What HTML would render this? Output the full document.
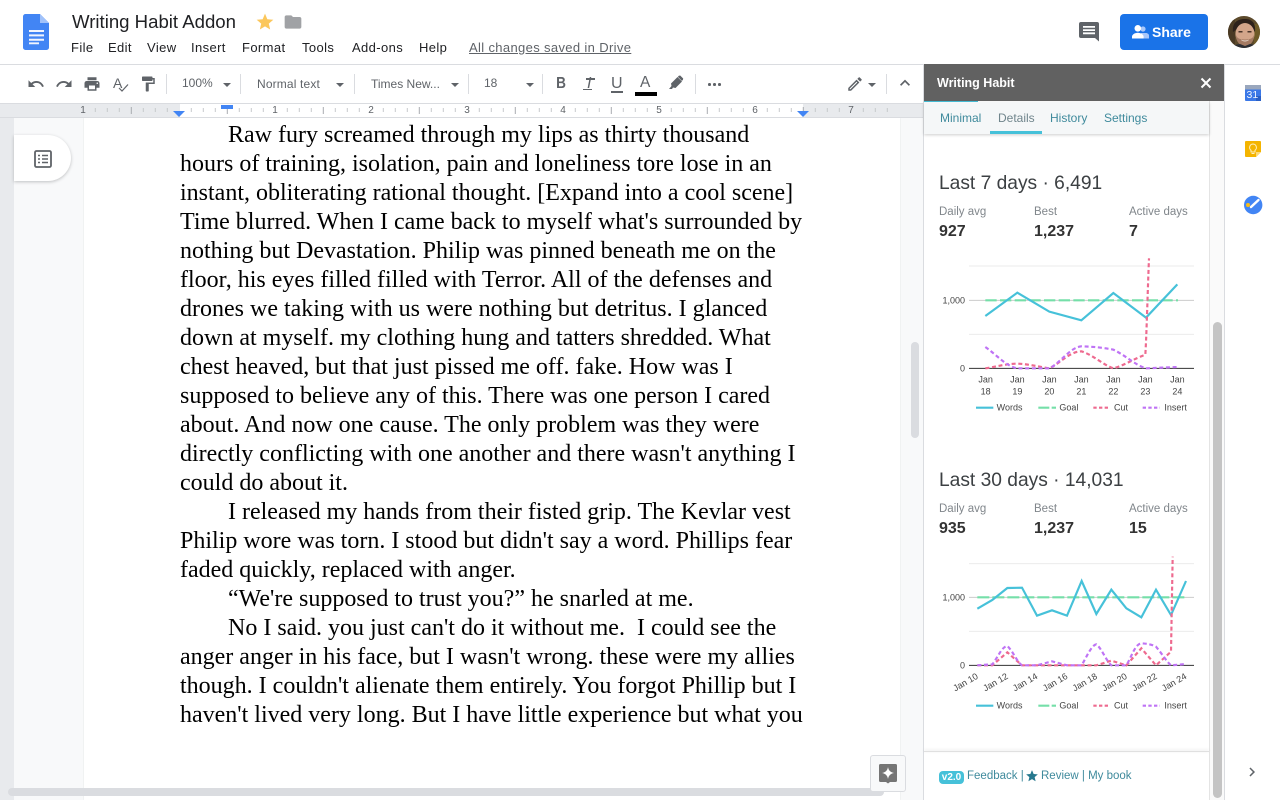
<!DOCTYPE html>
<html lang="en"><head><meta charset="utf-8"><title>Writing Habit Addon</title>
<style>
html,body{margin:0;padding:0;width:1280px;height:800px;overflow:hidden;background:#fff;font-family:"Liberation Sans",Arial,sans-serif}
.a{position:absolute}
.t{position:absolute;white-space:nowrap}
.m{font-size:13px;line-height:16px;top:40px;color:#202124;letter-spacing:.38px}
.tb{font-size:12px;line-height:16px;top:76px;color:#5f6368}
.arr{position:absolute;top:83px;width:0;height:0;border-left:4.5px solid transparent;border-right:4.5px solid transparent;border-top:4.5px solid #5f6368}
.sep{position:absolute;top:74px;width:1px;height:20px;background:#dadce0}
.ic{position:absolute;fill:#5f6368}
.dl{position:absolute;left:180px;white-space:nowrap;font-family:"Liberation Serif","Times New Roman",serif;font-size:24px;line-height:29px;color:#000}
.rn{position:absolute;top:105px;font-size:10px;line-height:12px;color:#5f6368;width:12px;text-align:center}
.tab{position:absolute;top:110px;font-size:12px;line-height:16px;color:#3f8a9c}
.h{position:absolute;left:939px;font-size:19.2px;line-height:24px;color:#3c4043;white-space:nowrap}
.lb{position:absolute;font-size:11.5px;line-height:14px;color:#80868b;white-space:nowrap}
.v{position:absolute;font-size:16px;font-weight:bold;line-height:18px;color:#333;white-space:nowrap}
.fl{position:absolute;top:768px;font-size:11.5px;line-height:16px;color:#3f8a9c;white-space:nowrap}
svg text{font-family:"Liberation Sans",Arial,sans-serif;font-size:27px;fill:#444}
</style></head><body>

<!-- top bar -->
<svg class="a" style="left:23px;top:14px" width="26" height="36" viewBox="0 0 26 36">
<path d="M2.500 0H17L26 9v24.500a2.500 2.500 0 0 1-2.500 2.500h-21A2.500 2.500 0 0 1 0 33.500V2.500A2.500 2.500 0 0 1 2.500 0z" fill="#4285f4"/>
<path d="M17 0l9 9h-9z" fill="#a1c2fa"/>
<path d="M6 16h15v2H6zM6 20.400h15v2H6zM6 24.700h15v2H6zM6 28.400h10v1.800H6z" fill="#f1f5fe"/>
</svg>
<div class="t" style="left:72px;top:11px;font-size:18.600px;line-height:22px;color:#202124">Writing Habit Addon</div>
<svg class="a" style="left:255px;top:12px" width="20" height="20" viewBox="0 0 24 24"><path fill="#fbc75c" d="M12 17.270L18.180 21l-1.640-7.030L22 9.240l-7.190-.61L12 2 9.190 8.630 2 9.240l5.460 4.730L5.820 21z"/></svg>
<svg class="a" style="left:283px;top:12px" width="20" height="20" viewBox="0 0 24 24"><path fill="#a0a2a5" d="M10 4H4c-1.100 0-2 .9-2 2v12c0 1.100.9 2 2 2h16c1.100 0 2-.9 2-2V8c0-1.100-.9-2-2-2h-8l-2-2z"/></svg>
<div class="t m" style="left:71px">File</div>
<div class="t m" style="left:108px">Edit</div>
<div class="t m" style="left:147px">View</div>
<div class="t m" style="left:191px">Insert</div>
<div class="t m" style="left:242px">Format</div>
<div class="t m" style="left:302px">Tools</div>
<div class="t m" style="left:352px">Add-ons</div>
<div class="t m" style="left:419px">Help</div>
<div class="t m" style="left:469px;color:#5f6368;text-decoration:underline;letter-spacing:.35px">All changes saved in Drive</div>

<svg class="ic" style="left:1079px;top:22px" width="20" height="20" viewBox="0 0 20 20"><path d="M2 0h16a2 2 0 0 1 2 2v17.500L16 16H2a2 2 0 0 1-2-2V2a2 2 0 0 1 2-2zM4 4v1.800h12V4zM4 7.200V9h12V7.200zM4 10.400v1.800h12v-1.800z" fill-rule="evenodd"/></svg>
<div class="a" style="left:1120px;top:14px;width:88px;height:36px;background:#1a73e8;border-radius:4px"></div>
<svg class="a" style="left:1132px;top:25px" width="17" height="14" viewBox="0 0 17 14"><circle cx="11" cy="4" r="2.600" fill="#a8c7fa"/><path d="M9 8h5c1.500 0 3 1.200 3 2.500V13.500H10z" fill="#a8c7fa"/><circle cx="5.800" cy="3.300" r="3.300" fill="#fff"/><path d="M0 13.500v-2c0-2 3-3.800 5.800-3.800s5.800 1.800 5.800 3.800v2z" fill="#fff"/></svg>
<div class="t" style="left:1152px;top:23px;font-size:14px;font-weight:bold;line-height:18px;color:#fff">Share</div>
<svg class="a" style="left:1228px;top:16px" width="32" height="32" viewBox="0 0 32 32">
<defs><clipPath id="av"><circle cx="16" cy="16" r="16"/></clipPath></defs>
<g clip-path="url(#av)"><rect width="32" height="32" fill="#5c4a2c"/>
<rect x="0" y="0" width="7" height="32" fill="#4a3a24"/><rect x="26" y="8" width="6" height="24" fill="#6e5a28"/>
<path d="M5 16C4 6 10 3 17 3s11 4 10 13l-2-3c-4-3-11-3-16 0z" fill="#2d211b"/>
<ellipse cx="17" cy="18" rx="9.500" ry="11" fill="#d3a58a"/>
<path d="M8 19c0 8 5 11 9 11s9-3 9-11c-1 3-3 4.500-9 4.500S9 22 8 19z" fill="#a47a62"/>
<path d="M13 23.500c2 1.500 6 1.500 8 0-1 2.500-7 2.500-8 0z" fill="#f5ebe2"/>
<rect x="10.500" y="15" width="4" height="1.500" fill="#4a3428"/><rect x="19.500" y="15" width="4" height="1.500" fill="#4a3428"/>
<path d="M3 32c1-3 6-3.500 9-4l5 2 5-2c3 .5 7 1 9 4z" fill="#2b2d33"/></g></svg>

<div class="a" style="left:0;top:64px;width:1225px;height:1px;background:#dadce0"></div>
<div class="a" style="left:1225px;top:64px;width:55px;height:1px;background:#dadce0"></div>

<!-- toolbar -->
<svg class="ic" style="left:27px;top:75px" width="18" height="18" viewBox="0 0 24 24"><path d="M12.500 8c-2.650 0-5.050.99-6.900 2.600L2 7v9h9l-3.620-3.620c1.390-1.160 3.160-1.880 5.120-1.880 3.540 0 6.550 2.310 7.600 5.500l2.370-.78C21.080 11.030 17.150 8 12.500 8z"/></svg>
<svg class="ic" style="left:55px;top:75px" width="18" height="18" viewBox="0 0 24 24"><path d="M18.400 10.600C16.550 8.990 14.150 8 11.500 8c-4.650 0-8.580 3.030-9.960 7.220L3.900 16c1.050-3.190 4.050-5.500 7.600-5.500 1.950 0 3.730.72 5.120 1.880L13 16h9V7l-3.600 3.600z"/></svg>
<svg class="ic" style="left:83px;top:75px" width="18" height="18" viewBox="0 0 24 24"><path d="M19 8H5c-1.660 0-3 1.340-3 3v6h4v4h12v-4h4v-6c0-1.660-1.340-3-3-3zm-3 11H8v-5h8v5zm3-7c-.55 0-1-.45-1-1s.45-1 1-1 1 .45 1 1-.45 1-1 1zm-1-9H6v4h12V3z"/></svg>
<div class="t" style="left:113px;top:75px;font-size:14px;line-height:16px;color:#5f6368">A</div>
<svg class="a" style="left:118px;top:83px" width="11" height="10" viewBox="0 0 11 10"><path d="M1 5l3 3 6-6.500" fill="none" stroke="#5f6368" stroke-width="1.200"/></svg>
<svg class="ic" style="left:139px;top:75px" width="18" height="18" viewBox="0 0 24 24"><path d="M18 4V3c0-.55-.45-1-1-1H5c-.55 0-1 .45-1 1v4c0 .55.45 1 1 1h12c.55 0 1-.45 1-1V6h1v4H9v11c0 .55.45 1 1 1h2c.55 0 1-.45 1-1v-9h8V4h-3z"/></svg>
<div class="sep" style="left:166px"></div>
<div class="t tb" style="left:182px;top:75px">100%</div><div class="arr" style="left:223px"></div>
<div class="sep" style="left:240px"></div>
<div class="t tb" style="left:257px;letter-spacing:.15px">Normal text</div><div class="arr" style="left:336px"></div>
<div class="sep" style="left:354px"></div>
<div class="t tb" style="left:371px">Times New...</div><div class="arr" style="left:451px"></div>
<div class="sep" style="left:468px"></div>
<div class="t tb" style="left:484px;top:75px">18</div><div class="arr" style="left:526px"></div>
<div class="sep" style="left:542px"></div>
<div class="t" style="left:555px;top:75px;width:12px;text-align:center;font-size:16px;font-weight:bold;line-height:18px;color:#5f6368;transform:scaleX(.85)">B</div>
<div class="t" style="left:587px;top:75px;font-size:16px;font-style:italic;line-height:18px;color:#5f6368">I</div>
<div class="a" style="left:586px;top:78px;width:9px;height:1.500px;background:#5f6368"></div>
<div class="a" style="left:583px;top:88.500px;width:9px;height:1.500px;background:#5f6368"></div>
<div class="t" style="left:611px;top:75px;font-size:16px;line-height:18px;color:#5f6368;">U</div>
<div class="a" style="left:611px;top:91px;width:12px;height:1.500px;background:#5f6368"></div>
<div class="t" style="left:640px;top:74px;font-size:15.500px;line-height:18px;color:#5f6368">A</div>
<div class="a" style="left:635px;top:92px;width:22px;height:4px;background:#000"></div>
<svg class="ic" style="left:668px;top:75px" width="16" height="16" viewBox="0 0 16 16"><path d="M1 14l2.500-3 -.5-2.500L9.500 2l4.500 4.500L7.500 13 5 12.500 4 14z"/><path d="M10.800 .8l1.400-.3 3 3-.3 1.400-1 1-4-4z"/></svg>
<div class="sep" style="left:695px"></div>
<div class="a" style="left:708px;top:83px;width:2.500px;height:2.500px;background:#5f6368;border-radius:50%;box-shadow:5px 0 #5f6368,10px 0 #5f6368"></div>
<svg class="ic" style="left:846px;top:75px" width="18" height="18" viewBox="0 0 24 24"><path d="M3 17.250V21h3.750L17.810 9.940l-3.750-3.750L3 17.250zM5.920 19H5v-.92l9.060-9.060.92.92L5.920 19zM20.710 7.040c.39-.39.39-1.020 0-1.410l-2.340-2.340c-.39-.39-1.020-.39-1.410 0l-1.830 1.830 3.750 3.750 1.830-1.830z"/></svg>
<div class="arr" style="left:868px"></div>
<div class="sep" style="left:886px"></div>
<svg class="ic" style="left:895px;top:73px" width="20" height="20" viewBox="0 0 24 24"><path d="M12 8l-6 6 1.410 1.410L12 10.830l4.590 4.580L18 14z"/></svg>

<!-- doc background -->
<div class="a" style="left:0;top:118px;width:924px;height:682px;background:#f8f9fa"></div>
<div class="a" style="left:0;top:118px;width:14px;height:682px;background:#e8eaed"></div>
<div class="a" style="left:84px;top:118px;width:816px;height:682px;background:#fff;box-shadow:0 0 1px #d0d3d6"></div>

<!-- ruler -->
<div class="a" style="left:0;top:103px;width:924px;height:15px;background:#e8eaed;border-top:1px solid #dadce0;border-bottom:1px solid #dadce0;box-sizing:border-box"></div>
<div class="a" style="left:180px;top:104px;width:623px;height:13px;background:#fff"></div>
<svg class="a" style="left:0;top:104px" width="924" height="14">
<defs><pattern id="rp" x="83.300" y="0" width="96" height="14" patternUnits="userSpaceOnUse"><path d="M12 4v4M24 4v4M36 4v4M60 4v4M72 4v4M84 4v4" stroke="#c6c9cc" stroke-width="1"/><path d="M48 3v7" stroke="#a8acb0" stroke-width="1"/></pattern></defs>
<rect x="88" width="800" height="14" fill="url(#rp)"/></svg>
<div class="rn" style="left:77px">1</div><div class="rn" style="left:269px">1</div><div class="rn" style="left:365px">2</div><div class="rn" style="left:461px">3</div><div class="rn" style="left:557px">4</div><div class="rn" style="left:653px">5</div><div class="rn" style="left:749px">6</div><div class="rn" style="left:845px">7</div>
<div class="a" style="left:221px;top:105px;width:12px;height:4px;background:#4285f4"></div>
<div class="a" style="left:173px;top:111px;width:0;height:0;border-left:6px solid transparent;border-right:6px solid transparent;border-top:6px solid #4285f4"></div>
<div class="a" style="left:797px;top:111px;width:0;height:0;border-left:6px solid transparent;border-right:6px solid transparent;border-top:6px solid #4285f4"></div>

<!-- outline button -->
<div class="a" style="left:14px;top:135px;width:57px;height:46px;background:#fff;border-radius:0 23px 23px 0;box-shadow:0 1px 3px rgba(60,64,67,.3)"></div>
<svg class="a" style="left:34px;top:150px" width="18" height="18" viewBox="0 0 18 18"><rect x="1" y="1" width="16" height="16" rx="1.500" fill="none" stroke="#5f6368" stroke-width="1.800"/><path d="M4 5.500h2M8 5.500h6M4 9h2M8 9h6M4 12.500h2M8 12.500h6" stroke="#5f6368" stroke-width="1.600"/></svg>

<!-- document text -->
<div class="dl" style="left:228px;top:121px">Raw fury screamed through my lips as thirty thousand</div>
<div class="dl" style="top:150px">hours of training, isolation, pain and loneliness tore lose in an</div>
<div class="dl" style="top:179px">instant, obliterating rational thought. [Expand into a cool scene]</div>
<div class="dl" style="top:208px">Time blurred. When I came back to myself what's surrounded by</div>
<div class="dl" style="top:237px">nothing but Devastation. Philip was pinned beneath me on the</div>
<div class="dl" style="top:266px">floor, his eyes filled filled with Terror. All of the defenses and</div>
<div class="dl" style="top:295px">drones we taking with us were nothing but detritus. I glanced</div>
<div class="dl" style="top:324px">down at myself. my clothing hung and tatters shredded. What</div>
<div class="dl" style="top:353px">chest heaved, but that just pissed me off. fake. How was I</div>
<div class="dl" style="top:382px">supposed to believe any of this. There was one person I cared</div>
<div class="dl" style="top:411px">about. And now one cause. The only problem was they were</div>
<div class="dl" style="top:440px">directly conflicting with one another and there wasn't anything I</div>
<div class="dl" style="top:469px">could do about it.</div>
<div class="dl" style="left:228px;top:498px">I released my hands from their fisted grip. The Kevlar vest</div>
<div class="dl" style="top:527px">Philip wore was torn. I stood but didn't say a word. Phillips fear</div>
<div class="dl" style="top:556px">faded quickly, replaced with anger.</div>
<div class="dl" style="left:228px;top:585px">“We're supposed to trust you?” he snarled at me.</div>
<div class="dl" style="left:228px;top:614px;white-space:pre">No I said. you just can't do it without me.  I could see the</div>
<div class="dl" style="top:643px">anger anger in his face, but I wasn't wrong. these were my allies</div>
<div class="dl" style="top:672px">though. I couldn't alienate them entirely. You forgot Phillip but I</div>
<div class="dl" style="top:701px">haven't lived very long. But I have little experience but what you</div>

<!-- scrollbars -->
<div class="a" style="left:911px;top:342px;width:8px;height:96px;background:#dadce0;border-radius:4px"></div>
<div class="a" style="left:8px;top:788px;width:876px;height:8px;background:#dadce0;border-radius:4px"></div>

<!-- explore -->
<div class="a" style="left:870px;top:755px;width:36px;height:37px;background:#f8f9fa;border:1px solid #dadce0;border-radius:3px;box-sizing:border-box"></div>
<svg class="a" style="left:879px;top:764px" width="18" height="20" viewBox="0 0 18 20"><path d="M1.500 0h15A1.500 1.500 0 0 1 18 1.500v15a1.500 1.500 0 0 1-1.500 1.500H11l-2 1.500L7 18H1.500A1.500 1.500 0 0 1 0 16.500v-15A1.500 1.500 0 0 1 1.500 0z" fill="#757575"/><path d="M9 3c.6 3.500 2.500 5.400 6 6-3.500.6-5.400 2.500-6 6-.6-3.500-2.500-5.400-6-6 3.500-.6 5.400-2.500 6-6z" fill="#fff"/></svg>

<!-- panel -->
<div class="a" style="left:924px;top:64px;width:300px;height:736px;background:#fff"></div>
<div class="a" style="left:923px;top:64px;width:1px;height:736px;background:#dadce0"></div>
<div class="a" style="left:1209px;top:101px;width:15px;height:699px;background:#fafafa;border-left:1px solid #e4e4e4;box-sizing:border-box"></div>
<div class="a" style="left:1213px;top:322px;width:9px;height:476px;background:#c4c4c4;border-radius:5px"></div>
<div class="a" style="left:924px;top:64px;width:300px;height:37px;background:#616161"></div>
<div class="t" style="left:937px;top:75px;font-size:12.500px;font-weight:bold;line-height:16px;color:#fff">Writing Habit</div>
<svg class="a" style="left:1200px;top:77px" width="12" height="12" viewBox="0 0 12 12"><path d="M1.500 1.500l9 9M10.500 1.500l-9 9" stroke="#fff" stroke-width="2"/></svg>
<div class="a" style="left:924px;top:101px;width:54px;height:1px;background:#46c1d9"></div>
<div class="a" style="left:924px;top:102px;width:285px;height:32px;background:#f5f7f8;box-shadow:0 1px 3px rgba(0,0,0,.2)"></div>
<div class="tab" style="left:940px">Minimal</div>
<div class="tab" style="left:998px;color:#70858c">Details</div>
<div class="tab" style="left:1050px">History</div>
<div class="tab" style="left:1104px">Settings</div>
<div class="a" style="left:990px;top:131px;width:52px;height:3px;background:#46c1d9"></div>

<!-- stats 1 -->
<div class="h" style="top:172px">Last 7 days · 6,491</div>
<div class="lb" style="left:939px;top:205px">Daily avg</div><div class="lb" style="left:1034px;top:205px">Best</div><div class="lb" style="left:1129px;top:205px">Active days</div>
<div class="v" style="left:939px;top:223px">927</div><div class="v" style="left:1034px;top:223px">1,237</div><div class="v" style="left:1129px;top:223px">7</div>

<svg class="a" style="left:930px;top:250px" width="280" height="170" viewBox="0 0 840 510">
<path d="M117 48H792M117 253H792" stroke="#ebebeb" stroke-width="3"/>
<path d="M117 151H792" stroke="#ccc" stroke-width="3"/>
<path d="M117 355H792" stroke="#333" stroke-width="3"/>
<text x="105" y="161" text-anchor="end">1,000</text><text x="105" y="365" text-anchor="end">0</text>
<g text-anchor="middle"><text x="167" y="398">Jan</text><text x="167" y="434">18</text><text x="262" y="398">Jan</text><text x="262" y="434">19</text><text x="358" y="398">Jan</text><text x="358" y="434">20</text><text x="454" y="398">Jan</text><text x="454" y="434">21</text><text x="550" y="398">Jan</text><text x="550" y="434">22</text><text x="646" y="398">Jan</text><text x="646" y="434">23</text><text x="742" y="398">Jan</text><text x="742" y="434">24</text></g>
<path d="M166 151H744" stroke="#75dfa9" stroke-width="6.500" stroke-dasharray="34 10" fill="none"/>
<polyline points="166,198 262,128 358,185 454,211 550,129 648,203 742,103" fill="none" stroke="#46c1d9" stroke-width="6.500"/>
<path d="M166 355C200 350 230 341 262 341C295 342 325 350 358 355C390 340 420 304 454 304C490 315 520 345 550 355C585 345 615 325 646 314C650 250 653 120 657 25" fill="none" stroke="#ee6a8f" stroke-width="6.500" stroke-dasharray="12 8"/>
<path d="M166 291C200 315 230 350 262 355L358 355C390 340 420 292 454 289C490 290 520 293 550 299C585 315 615 345 648 355L742 351" fill="none" stroke="#bf73f5" stroke-width="6.500" stroke-dasharray="12 8"/>
<path d="M138 473H190" stroke="#46c1d9" stroke-width="6.500"/><text x="200" y="482">Words</text>
<path d="M325 473H378" stroke="#75dfa9" stroke-width="6.500" stroke-dasharray="33 7"/><text x="388" y="482">Goal</text>
<path d="M490 473H540" stroke="#ee6a8f" stroke-width="6.500" stroke-dasharray="10 7"/><text x="552" y="482">Cut</text>
<path d="M638 473H690" stroke="#bf73f5" stroke-width="6.500" stroke-dasharray="10 7"/><text x="703" y="482">Insert</text>
</svg>

<!-- stats 2 -->
<div class="h" style="top:469px">Last 30 days · 14,031</div>
<div class="lb" style="left:939px;top:502px">Daily avg</div><div class="lb" style="left:1034px;top:502px">Best</div><div class="lb" style="left:1129px;top:502px">Active days</div>
<div class="v" style="left:939px;top:520px">935</div><div class="v" style="left:1034px;top:520px">1,237</div><div class="v" style="left:1129px;top:520px">15</div>

<svg class="a" style="left:930px;top:545px" width="280" height="175" viewBox="0 0 840 525">
<path d="M117 56H792M117 259H792" stroke="#ebebeb" stroke-width="3"/>
<path d="M117 157H792" stroke="#ccc" stroke-width="3"/>
<path d="M117 361H792" stroke="#333" stroke-width="3"/>
<text x="105" y="167" text-anchor="end">1,000</text><text x="105" y="371" text-anchor="end">0</text>
<g text-anchor="end">
<text transform="translate(146 399) rotate(-30)">Jan 10</text><text transform="translate(236 399) rotate(-30)">Jan 12</text><text transform="translate(325 399) rotate(-30)">Jan 14</text><text transform="translate(415 399) rotate(-30)">Jan 16</text><text transform="translate(504 399) rotate(-30)">Jan 18</text><text transform="translate(593 399) rotate(-30)">Jan 20</text><text transform="translate(683 399) rotate(-30)">Jan 22</text><text transform="translate(772 399) rotate(-30)">Jan 24</text></g>
<path d="M142 157H768" stroke="#75dfa9" stroke-width="6.500" stroke-dasharray="36 9" fill="none"/>
<polyline points="142,191 187,165 232,129 276,128 321,212 366,196 411,212 455,108 499,207 544,134 589,190 634,217 678,134 723,210 768,108" fill="none" stroke="#46c1d9" stroke-width="6.500"/>
<polyline points="142,361 187,361 232,322 276,361 499,361 544,347 589,361 634,310 678,361 723,320 728,35" fill="none" stroke="#ee6a8f" stroke-width="6.500" stroke-dasharray="12 8"/>
<path d="M142 361L187 358C205 335 215 305 232 303C250 320 260 350 276 361L321 361L366 349L411 361L455 361C470 335 485 300 499 298C515 310 530 350 544 361L589 361C605 335 615 297 634 295C650 296 665 298 678 305C695 325 710 350 723 361L768 357" fill="none" stroke="#bf73f5" stroke-width="6.500" stroke-dasharray="12 8"/>
<path d="M138 482H190" stroke="#46c1d9" stroke-width="6.500"/><text x="200" y="491">Words</text>
<path d="M325 482H378" stroke="#75dfa9" stroke-width="6.500" stroke-dasharray="33 7"/><text x="388" y="491">Goal</text>
<path d="M490 482H540" stroke="#ee6a8f" stroke-width="6.500" stroke-dasharray="10 7"/><text x="552" y="491">Cut</text>
<path d="M638 482H690" stroke="#bf73f5" stroke-width="6.500" stroke-dasharray="10 7"/><text x="703" y="491">Insert</text>
</svg>

<!-- footer -->
<div class="a" style="left:924px;top:751px;width:285px;height:1px;background:#e0e0e0;box-shadow:0 -1px 3px rgba(0,0,0,.15)"></div>
<div class="t" style="left:939px;top:771px;width:25px;height:13px;background:#46c1d9;border-radius:4px;color:#fff;font-size:10px;font-weight:bold;line-height:13px;text-align:center">v2.0</div>
<div class="fl" style="left:967px">Feedback |</div>
<svg class="a" style="left:1025px;top:769px" width="14" height="14" viewBox="0 0 24 24"><path fill="#26788e" d="M12 17.270L18.180 21l-1.640-7.030L22 9.240l-7.190-.61L12 2 9.190 8.630 2 9.240l5.460 4.730L5.820 21z"/></svg>
<div class="fl" style="left:1041px">Review | My book</div>

<!-- right sidebar -->
<div class="a" style="left:1224px;top:64px;width:1px;height:736px;background:#dadce0"></div>
<svg class="a" style="left:1245px;top:85px" width="16" height="16" viewBox="0 0 16 16"><rect width="16" height="16" rx="1" fill="#3b78e7"/><rect width="16" height="4.500" fill="#9aa7bd"/><rect x="11" y="11" width="5" height="5" fill="#2a5fc4"/></svg>
<div class="t" style="left:1246.500px;top:89px;font-size:10.500px;line-height:12px;color:#eef4fe">31</div>
<svg class="a" style="left:1245px;top:141px" width="16" height="16" viewBox="0 0 16 16"><path d="M1 0h14a1 1 0 0 1 1 1v10l-5 5H1a1 1 0 0 1-1-1V1a1 1 0 0 1 1-1z" fill="#f4b400"/><path d="M11 16v-5h5z" fill="#fcd977"/><path d="M8 3a3.500 3.500 0 0 1 2 6.300V11H6V9.300A3.500 3.500 0 0 1 8 3zM6.500 12.500h3" fill="none" stroke="#fdeebf" stroke-width="1"/></svg>
<svg class="a" style="left:1243px;top:195px" width="20" height="20" viewBox="0 0 20 20"><circle cx="10.200" cy="10" r="9.200" fill="#4285f4"/><circle cx="5" cy="10" r="2" fill="#f9bc15"/><path d="M8 12L15.500 5" stroke="#fff" stroke-width="2.400" stroke-linecap="round"/></svg>
<svg class="a" style="left:1243px;top:763px" width="18" height="18" viewBox="0 0 24 24"><path fill="#5f6368" d="M10 6L8.590 7.410 13.170 12l-4.580 4.590L10 18l6-6z"/></svg>
</body></html>
